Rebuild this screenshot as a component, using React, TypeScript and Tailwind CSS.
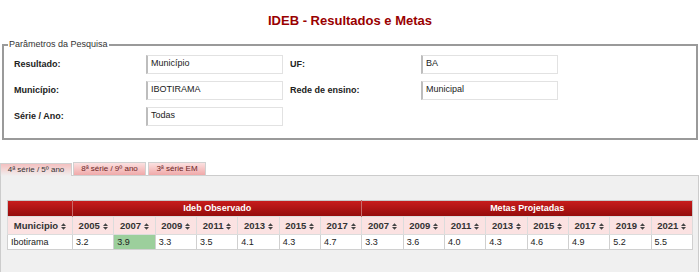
import React from 'react';

const observedYears = ['2005', '2007', '2009', '2011', '2013', '2015', '2017'];
const goalYears = ['2007', '2009', '2011', '2013', '2015', '2017', '2019', '2021'];
const observed = ['3.2', '3.9', '3.3', '3.5', '4.1', '4.3', '4.7'];
const goals = ['3.3', '3.6', '4.0', '4.3', '4.6', '4.9', '5.2', '5.5'];

function SortIcon() {
  return (
    <svg width="5" height="7" viewBox="0 0 5 7" className="ml-[3px] inline-block align-[-1px]">
      <path d="M0 2.9 L2.5 0.3 L5 2.9 Z M0 4.1 L2.5 6.7 L5 4.1 Z" fill="#444" />
    </svg>
  );
}

function Field({ value }: { value: string }) {
  return (
    <div className="h-[19px] w-[137px] border border-[#e2e2e2] border-l-2 border-l-[#bdbdbd] px-[3px] pt-[2px] text-[9px] leading-[11px] text-[#222]">
      {value}
    </div>
  );
}

function Label({ children, className = '' }: { children: React.ReactNode; className?: string }) {
  return (
    <div className={`flex h-[19px] items-center pt-[1px] text-[9px] font-bold text-[#222] ${className}`}>
      {children}
    </div>
  );
}

export default function App() {
  return (
    <div className="h-[272px] overflow-hidden bg-white font-['Liberation_Sans',Arial,sans-serif]">
      <h1 className="pt-[12px] text-center text-[13px] font-bold leading-[18px] text-[#990000]">
        IDEB - Resultados e Metas
      </h1>

      <fieldset className="mx-[2px] mt-[8px] border-2 border-[#9a9a9a] px-[10px] pb-[12px] pt-[4px]">
        <legend className="-ml-[6px] px-[1px] text-[9px] leading-[13px] text-[#333]">
          Parâmetros da Pesquisa
        </legend>
        <div className="flex flex-col gap-y-[7px]">
          <div className="flex">
            <Label className="w-[132px]">Resultado:</Label>
            <Field value="Município" />
            <Label className="ml-[7px] w-[131px]">UF:</Label>
            <Field value="BA" />
          </div>
          <div className="flex">
            <Label className="w-[132px]">Município:</Label>
            <Field value="IBOTIRAMA" />
            <Label className="ml-[7px] w-[131px]">Rede de ensino:</Label>
            <Field value="Municipal" />
          </div>
          <div className="flex">
            <Label className="w-[132px]">Série / Ano:</Label>
            <Field value="Todas" />
          </div>
        </div>
      </fieldset>

      <div className="mt-[22px]">
        <div className="relative z-10 flex h-[14px] items-end whitespace-nowrap text-[8px] leading-[10px]">
          <div className="flex h-[13px] w-[72px] items-center justify-center border border-b-0 border-[#d0d0d0] bg-gradient-to-b from-[#f3c0c0] to-[#f0f0f0] text-[#333]">
            4ª série / 5º ano
          </div>
          <div className="ml-[1px] flex h-[14px] w-[73px] items-center justify-center border border-[#d0d0d0] bg-gradient-to-b from-[#fbe0e0] to-[#efa9a9] text-[#6b1f1f]">
            8ª série / 9º ano
          </div>
          <div className="ml-[2px] flex h-[14px] w-[58px] items-center justify-center border border-[#d0d0d0] bg-gradient-to-b from-[#fbe0e0] to-[#efa9a9] text-[#6b1f1f]">
            3ª série EM
          </div>
        </div>
        <div className="-mt-[1px] mr-[1px] h-[200px] border border-[#cccccc] bg-[#f0f0f0] pl-[6px] pt-[24px]">
          <table className="w-[686px] table-fixed border-collapse border border-[#c8c8c8] bg-white text-[9px] leading-[11px] text-[#222]">
            <colgroup>
              <col className="w-[65px]" />
              {Array.from({ length: 15 }).map((_, i) => (
                <col key={i} />
              ))}
            </colgroup>
            <thead>
              <tr className="h-[16px] bg-gradient-to-b from-[#c81c1c] to-[#920a0a] text-white">
                <th className="border-r border-[#c86a6a] p-0"></th>
                <th colSpan={7} className="border-r border-[#c86a6a] p-0 text-center font-bold">
                  Ideb Observado
                </th>
                <th colSpan={8} className="p-0 text-center font-bold">
                  Metas Projetadas
                </th>
              </tr>
              <tr className="h-[18px] whitespace-nowrap bg-[#fbe2e2] text-[9.5px] text-[#333]">
                <th className="border border-[#dcdcdc] p-0 text-center font-bold">
                  Municipio
                  <SortIcon />
                </th>
                {observedYears.map((y, i) => (
                  <th key={'o' + i} className="border border-[#dcdcdc] p-0 text-center font-bold">
                    {y}
                    <SortIcon />
                  </th>
                ))}
                {goalYears.map((y, i) => (
                  <th key={'g' + i} className="border border-[#dcdcdc] p-0 text-center font-bold">
                    {y}
                    <SortIcon />
                  </th>
                ))}
              </tr>
            </thead>
            <tbody>
              <tr className="h-[15px]">
                <td className="border border-[#d0d0d0] px-[3px] py-0">Ibotirama</td>
                {observed.map((v, i) => (
                  <td
                    key={'ov' + i}
                    className={`border border-[#d0d0d0] px-[3px] py-0 ${i === 1 ? 'bg-[#9ccf9c]' : ''}`}
                  >
                    {v}
                  </td>
                ))}
                {goals.map((v, i) => (
                  <td key={'gv' + i} className="border border-[#d0d0d0] px-[3px] py-0">
                    {v}
                  </td>
                ))}
              </tr>
            </tbody>
          </table>
        </div>
      </div>
    </div>
  );
}
